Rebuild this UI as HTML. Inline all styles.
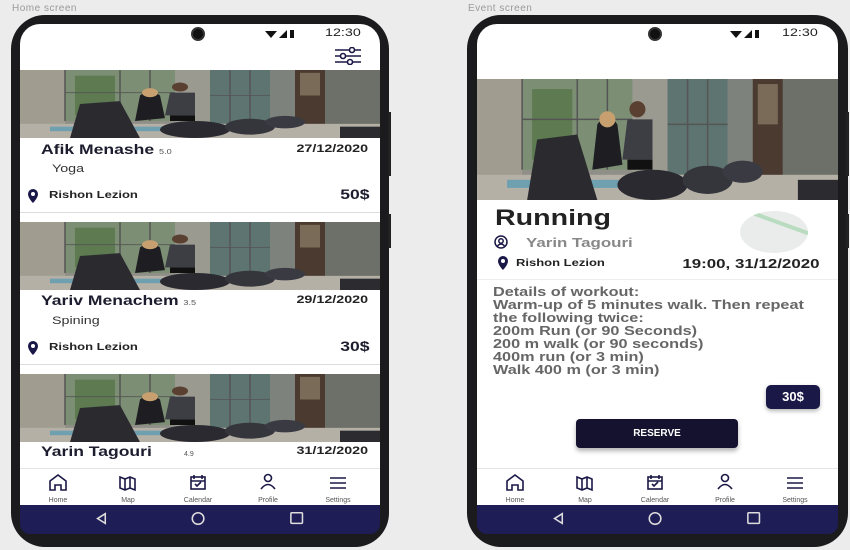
<!DOCTYPE html>
<html><head><meta charset="utf-8"><style>
*{margin:0;padding:0;box-sizing:border-box}
body{width:850px;height:550px;background:#ececec;position:relative;overflow:hidden;font-family:"Liberation Sans",Arial,sans-serif}
.abs{position:absolute}
.lbl{font-size:10px;color:#9a9a9a;letter-spacing:.5px}
.phone{position:absolute;background:#1b1b1d;border-radius:34px}
.screen{position:absolute;background:#fff;overflow:hidden;border-radius:20px 20px 0 0}
.sys{position:absolute;background:#1f1d55}
.cam{position:absolute;width:14px;height:14px;border-radius:50%;background:#111;border:2px solid #333}
.time{position:absolute;font-size:11px;color:#222}
.b{font-weight:bold}
.div{position:absolute;height:1px;background:#ddd}
.sx{transform:scaleX(1.3);transform-origin:left top;white-space:nowrap}
.sr{transform:scaleX(1.3);transform-origin:right top;white-space:nowrap;text-align:right}
</style></head><body>
<svg width="0" height="0" style="position:absolute">
<defs>
<symbol id="gym" viewBox="0 0 360 120" preserveAspectRatio="none">
<rect width="360" height="120" fill="#8f8f88"/>
<rect x="0" y="0" width="45" height="120" fill="#a09c90"/>
<rect x="45" y="0" width="110" height="90" fill="#7c8f74"/>
<rect x="55" y="10" width="40" height="70" fill="#5d7a50"/>
<rect x="155" y="0" width="35" height="120" fill="#9b9a90"/>
<rect x="190" y="0" width="60" height="95" fill="#5e7470"/>
<rect x="250" y="0" width="30" height="120" fill="#7d837c"/>
<rect x="275" y="0" width="30" height="110" fill="#4a3a30"/>
<rect x="280" y="5" width="20" height="40" fill="#7a6a58"/>
<rect x="305" y="0" width="55" height="100" fill="#6c7068"/>
<g stroke="#555" stroke-width="1.5"><line x1="45" y1="0" x2="45" y2="90"/><line x1="100" y1="0" x2="100" y2="90"/><line x1="130" y1="0" x2="130" y2="90"/><line x1="45" y1="40" x2="155" y2="40"/><line x1="210" y1="0" x2="210" y2="95"/><line x1="230" y1="0" x2="230" y2="95"/><line x1="190" y1="45" x2="250" y2="45"/></g>
<rect x="0" y="95" width="360" height="25" fill="#b5b0a6"/>
<rect x="30" y="100" width="200" height="8" fill="#6fa0b0"/>
<path d="M120 45 q10-15 20 0 l5 40 l-30 5z" fill="#1e1e22"/>
<circle cx="130" cy="40" r="8" fill="#c8a070"/>
<path d="M150 40 h25 v40 h-30z" fill="#3c3e44"/>
<circle cx="160" cy="30" r="8" fill="#5a4030"/>
<path d="M150 80 h25 v10 h-25z" fill="#111"/>
<path d="M60 60 l40 -5 l20 65 h-70z" fill="#2b2b2f"/>
<ellipse cx="175" cy="105" rx="35" ry="15" fill="#2a2a30"/>
<ellipse cx="230" cy="100" rx="25" ry="14" fill="#35353c"/>
<ellipse cx="265" cy="92" rx="20" ry="11" fill="#3a3a42"/>
<rect x="320" y="100" width="40" height="20" fill="#2b2b30"/>
</symbol>
<symbol id="pin" viewBox="0 0 12 14"><path d="M6 0a5 5 0 0 0-5 5c0 4 5 9 5 9s5-5 5-9a5 5 0 0 0-5-5zm0 3a2 2 0 1 1 0 4a2 2 0 0 1 0-4z" fill="#1a1846" fill-rule="evenodd"/></symbol>
<symbol id="navs" viewBox="0 0 360 40">
<g fill="none" stroke="#1a1846" stroke-width="1.6">
<path d="M30 12 l8-6 l8 6 v9 h-5 v-5 h-6 v5 h-5z"/>
<path d="M100 8 l5 2 l5-2 l5 2 v11 l-5-2 l-5 2 l-5-2z M105 10v11 M110 8v11"/>
<rect x="171" y="8" width="14" height="12"/><path d="M171 12h14 M174 6v4 M182 6v4 M175 15l2 2l4-4"/>
<circle cx="248" cy="9" r="3.5"/><path d="M241 20 q7-9 14 0"/>
<path d="M310 9h16 M310 14h16 M310 19h16"/>
</g>
<g font-size="7" fill="#555" text-anchor="middle" font-family="Liberation Sans,Arial,sans-serif"><text x="38" y="33">Home</text><text x="108" y="33">Map</text><text x="178" y="33">Calendar</text><text x="248" y="33">Profile</text><text x="318" y="33">Settings</text></g>
</symbol>
<symbol id="sysn" viewBox="0 0 360 30"><g fill="none" stroke="#ddd" stroke-width="1.6"><path d="M82 9 l-8 5 l8 5z"/><circle cx="178" cy="14" r="6"/><rect x="274" y="8" width="12" height="11" rx="1"/></g></symbol>
<symbol id="stat" viewBox="0 0 50 12"><path d="M0 2h12l-6 7z" fill="#111"/><path d="M14 9l8-8v8z" fill="#111"/><rect x="25" y="1" width="4" height="8" fill="#111"/></symbol>
</defs></svg>

<div class="abs lbl" style="left:12px;top:3px">Home screen</div>
<div class="abs lbl" style="left:468px;top:3px">Event screen</div>

<!-- LEFT PHONE -->
<div class="phone" style="left:11px;top:15px;width:378px;height:532px"></div>
<div class="abs" style="left:388px;top:112px;width:3px;height:64px;background:#222"></div>
<div class="abs" style="left:388px;top:214px;width:3px;height:34px;background:#222"></div>
<div class="screen" style="left:20px;top:24px;width:360px;height:482px">
 <div class="cam" style="left:171px;top:3px"></div>
 <svg class="abs" style="left:245px;top:5px" width="50" height="12"><use href="#stat"/></svg>
 <div class="time sx" style="left:305px;top:3px">12:30</div>
 <svg class="abs" style="left:314px;top:23px" width="28" height="18" viewBox="0 0 28 18"><g stroke="#1a1846" stroke-width="1.6" fill="#fff"><path d="M1 3h26M1 9h26M1 15h26"/><circle cx="18" cy="3" r="2.5"/><circle cx="9" cy="9" r="2.5"/><circle cx="16" cy="15" r="2.5"/></g></svg>
 <svg class="abs" style="left:0;top:46px" width="360" height="68"><use href="#gym"/></svg>
 <div class="abs b sx" style="left:21px;top:118px;font-size:13.5px;color:#1c1c2e">Afik Menashe <span style="font-size:7px;font-weight:normal;color:#555">5.0</span></div>
 <div class="abs b sr" style="right:12px;top:119px;font-size:11px;color:#222">27/12/2020</div>
 <div class="abs sx" style="left:32px;top:139px;font-size:11px;color:#333">Yoga</div>
 <svg class="abs" style="left:7px;top:165px" width="12" height="14"><use href="#pin"/></svg>
 <div class="abs b sx" style="left:29px;top:166px;font-size:10px;color:#222">Rishon Lezion</div>
 <div class="abs b sr" style="right:10px;top:163px;font-size:13.5px;color:#1c1c2e">50$</div>
 <div class="div" style="left:0;top:188px;width:360px"></div>
 <svg class="abs" style="left:0;top:198px" width="360" height="68"><use href="#gym"/></svg>
 <div class="abs b sx" style="left:21px;top:269px;font-size:13.5px;color:#1c1c2e">Yariv Menachem <span style="font-size:7px;font-weight:normal;color:#555">3.5</span></div>
 <div class="abs b sr" style="right:12px;top:270px;font-size:11px;color:#222">29/12/2020</div>
 <div class="abs sx" style="left:32px;top:291px;font-size:11px;color:#333">Spining</div>
 <svg class="abs" style="left:7px;top:317px" width="12" height="14"><use href="#pin"/></svg>
 <div class="abs b sx" style="left:29px;top:318px;font-size:10px;color:#222">Rishon Lezion</div>
 <div class="abs b sr" style="right:10px;top:315px;font-size:13.5px;color:#1c1c2e">30$</div>
 <div class="div" style="left:0;top:340px;width:360px"></div>
 <svg class="abs" style="left:0;top:350px" width="360" height="68"><use href="#gym"/></svg>
 <div class="abs b sx" style="left:21px;top:420px;font-size:13.5px;color:#1c1c2e">Yarin Tagouri</div>
 <div class="abs" style="left:164px;top:427px;font-size:7px;color:#555">4.9</div>
 <div class="abs b sr" style="right:12px;top:421px;font-size:11px;color:#222">31/12/2020</div>
 <div class="abs" style="left:0;top:444px;width:360px;height:38px;background:#fff;border-top:1px solid #e5e5e5"></div>
 <svg class="abs" style="left:0;top:445px" width="360" height="40"><use href="#navs"/></svg>
</div>
<div class="sys" style="left:20px;top:505px;width:360px;height:29px;border-radius:0 0 10px 10px"><svg width="360" height="29"><use href="#sysn"/></svg></div>

<!-- RIGHT PHONE -->
<div class="phone" style="left:467px;top:15px;width:381px;height:532px"></div>
<div class="abs" style="left:846px;top:112px;width:3px;height:64px;background:#222"></div>
<div class="abs" style="left:846px;top:214px;width:3px;height:34px;background:#222"></div>
<div class="screen" style="left:477px;top:24px;width:361px;height:482px">
 <div class="cam" style="left:171px;top:3px"></div>
 <svg class="abs" style="left:253px;top:5px" width="50" height="12"><use href="#stat"/></svg>
 <div class="time sx" style="left:305px;top:3px">12:30</div>
 <svg class="abs" style="left:0;top:55px" width="361" height="121"><use href="#gym"/></svg>
 <div class="abs b sx" style="left:18px;top:181px;font-size:22px;color:#222">Running</div>
 <svg class="abs" style="left:17px;top:211px" width="14" height="14" viewBox="0 0 14 14"><g fill="none" stroke="#1a1846" stroke-width="1.5"><circle cx="7" cy="7" r="6"/><circle cx="7" cy="6" r="2.2"/><path d="M3.5 11q3.5-4 7 0"/></g></svg>
 <div class="abs b sx" style="left:49px;top:211px;font-size:13px;color:#888">Yarin Tagouri</div>
 <div class="abs" style="left:263px;top:187px;width:68px;height:42px;border-radius:50%;background:#e9ecea;overflow:hidden"><div class="abs" style="left:0;top:10px;width:80px;height:4px;background:#b9dcc0;transform:rotate(20deg)"></div></div>
 <svg class="abs" style="left:20px;top:232px" width="12" height="14"><use href="#pin"/></svg>
 <div class="abs b sx" style="left:39px;top:234px;font-size:10px;color:#222">Rishon Lezion</div>
 <div class="abs b sr" style="right:18px;top:232px;font-size:13px;color:#222">19:00, 31/12/2020</div>
 <div class="div" style="left:0;top:255px;width:361px;background:#eee"></div>
 <div class="abs b sx" style="left:16px;top:262px;font-size:12.5px;line-height:13px;color:#666">Details of workout:<br>Warm-up of 5 minutes walk. Then repeat<br>the following twice:<br>200m Run (or 90 Seconds)<br>200 m walk (or 90 seconds)<br>400m run (or 3 min)<br>Walk 400 m (or 3 min)</div>
 <div class="abs b" style="left:289px;top:361px;width:54px;height:24px;border-radius:5px;background:#1a1846;color:#fff;font-size:13px;text-align:center;line-height:24px;box-shadow:0 2px 4px rgba(0,0,0,.3)">30$</div>
 <div class="abs b" style="left:99px;top:395px;width:162px;height:29px;border-radius:4px;background:#14122e;color:#fff;font-size:10px;text-align:center;line-height:29px;box-shadow:0 3px 5px rgba(0,0,0,.3)">RESERVE</div>
 <div class="abs" style="left:0;top:444px;width:361px;height:38px;background:#fff;border-top:1px solid #e5e5e5"></div>
 <svg class="abs" style="left:0;top:445px" width="360" height="40"><use href="#navs"/></svg>
</div>
<div class="sys" style="left:477px;top:505px;width:361px;height:29px;border-radius:0 0 10px 10px"><svg width="360" height="29"><use href="#sysn"/></svg></div>
</body></html>
